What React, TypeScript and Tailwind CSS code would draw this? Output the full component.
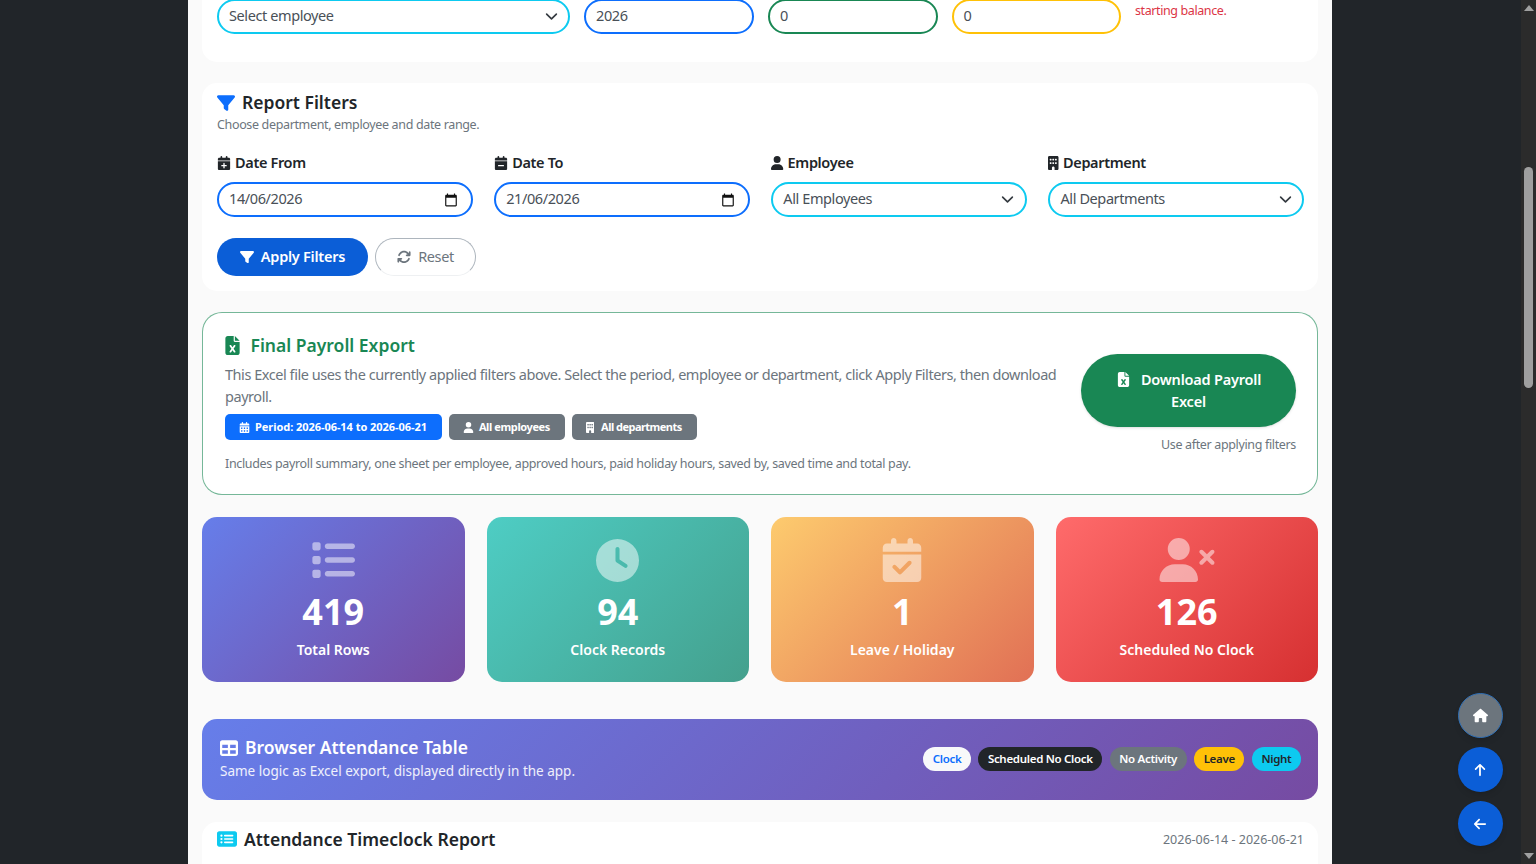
import type { ReactNode } from 'react';
import {
  FaFilter, FaCalendarPlus, FaCalendarMinus, FaUser, FaBuilding, FaArrowsRotate, FaFileExcel,
  FaCalendarDays, FaList, FaClock, FaCalendarCheck, FaUserXmark, FaTable, FaRectangleList,
  FaHouse, FaArrowUp, FaArrowLeft,
} from 'react-icons/fa6';

function Chevron() {
  return (
    <svg viewBox="0 0 16 16" className="w-[13px] h-[13px] shrink-0 -mr-[1.5px]" fill="none" stroke="#343a40" strokeWidth="2" strokeLinecap="round" strokeLinejoin="round">
      <path d="m2 5 6 6 6-6" />
    </svg>
  );
}

function CalendarGlyph() {
  return (
    <svg viewBox="0 0 24 24" className="w-[14px] h-[14px] shrink-0 mr-[1px]" fill="#111">
      <path d="M20 3h-1V1h-2v2H7V1H5v2H4c-1.1 0-2 .9-2 2v16c0 1.1.9 2 2 2h16c1.1 0 2-.9 2-2V5c0-1.1-.9-2-2-2zm0 18H4V8h16v13z" />
    </svg>
  );
}

function Field({ border, children, right }: { border: string; children: ReactNode; right?: ReactNode }) {
  return (
    <div className={`h-[35px] rounded-[18px] border-2 ${border} bg-white pl-[10px] pr-[12px] flex items-center justify-between text-[14.5px] tracking-[-0.4px] text-[#495057]`}>
      <span className="-mt-[2px]">{children}</span>
      {right}
    </div>
  );
}

function FilterCol({ icon, label, children }: { icon: ReactNode; label: string; children: ReactNode }) {
  return (
    <div>
      <div className="h-[20px] flex items-center gap-[4px] text-[14.5px] tracking-[-0.35px] font-semibold text-[#212529] mb-[9px]">
        {icon}
        <span>{label}</span>
      </div>
      {children}
    </div>
  );
}

function Badge({ className, icon, children }: { className: string; icon: ReactNode; children: ReactNode }) {
  return (
    <span className={`h-[26px] rounded-[5px] text-white text-[11px] font-bold flex items-center ${className}`}>
      {icon}
      {children}
    </span>
  );
}

function Stat({ gradient, icon, value, label }: { gradient: string; icon: ReactNode; value: string; label: string }) {
  return (
    <div className={`h-[165px] rounded-[15px] ${gradient} text-white flex flex-col items-center pt-[21px]`}>
      <div className="h-[44px] flex items-center justify-center text-white/50">{icon}</div>
      <div className="text-[36px] leading-[48px] font-bold mt-[6px]">{value}</div>
      <div className="text-[14px] leading-[20px] font-semibold mt-[4px]">{label}</div>
    </div>
  );
}

function Pill({ color, children }: { color: string; children: ReactNode }) {
  return <span className={`h-[24px] rounded-full px-[9.5px] flex items-center text-[11.5px] tracking-[-0.3px] font-semibold ${color}`}>{children}</span>;
}

function RoundButton({ color, children }: { color: string; children: ReactNode }) {
  return <button className={`w-[45px] h-[45px] rounded-full flex items-center justify-center text-white shadow-md ${color}`}>{children}</button>;
}

export default function App() {
  return (
    <div className="h-screen overflow-hidden bg-[#212529] flex font-['Noto_Sans','Open_Sans',sans-serif]">
      <main className="ml-[188px] w-[1144px] h-full overflow-hidden bg-[#fafafa] px-[14px]">
        {/* balance card, cut by the scroll position */}
        <section className="bg-white rounded-b-[15px] px-[15px] pb-[28px] -mt-px grid grid-cols-[353px_170px_169.5px_169.5px_1fr] gap-[14px]">
          <Field border="border-[#0dcaf0]" right={<Chevron />}>Select employee</Field>
          <Field border="border-[#0d6efd]">2026</Field>
          <Field border="border-[#198754]">0</Field>
          <Field border="border-[#ffc107]">0</Field>
          <p className="text-[12.5px] tracking-[-0.4px] leading-[20px] text-[#dc3545] pt-[2px]">starting balance.</p>
        </section>

        <section className="mt-[21px] h-[208px] bg-white rounded-[15px] pl-[15px] pr-[14px] pt-[8px]">
          <div className="flex items-center gap-[7px] h-[22px] pt-[1px]">
            <FaFilter className="text-[#0d6efd] text-[18px]" />
            <h2 className="text-[17.5px] font-semibold text-[#212529]">Report Filters</h2>
          </div>
          <p className="text-[12.5px] tracking-[-0.35px] leading-[20px] text-[#6c757d] mt-[2px]">Choose department, employee and date range.</p>
          <div className="grid grid-cols-4 gap-[21.67px] mt-[18px]">
            <FilterCol icon={<FaCalendarPlus className="text-[14px]" />} label="Date From">
              <Field border="border-[#0d6efd]" right={<CalendarGlyph />}>14/06/2026</Field>
            </FilterCol>
            <FilterCol icon={<FaCalendarMinus className="text-[14px]" />} label="Date To">
              <Field border="border-[#0d6efd]" right={<CalendarGlyph />}>21/06/2026</Field>
            </FilterCol>
            <FilterCol icon={<FaUser className="w-[12.25px] h-[14px]" />} label="Employee">
              <Field border="border-[#0dcaf0]" right={<Chevron />}>All Employees</Field>
            </FilterCol>
            <FilterCol icon={<FaBuilding className="w-[10.5px] h-[14px]" />} label="Department">
              <Field border="border-[#0dcaf0]" right={<Chevron />}>All Departments</Field>
            </FilterCol>
          </div>
          <div className="flex gap-[7px] mt-[21px]">
            <button className="h-[38px] w-[151px] rounded-full bg-[#0b5ed7] text-white text-[14.5px] tracking-[-0.25px] font-semibold flex items-center justify-center gap-[7px]">
              <FaFilter className="text-[14px]" /> Apply Filters
            </button>
            <button className="h-[38px] w-[101px] rounded-full border border-[#adb5bd] border-b-[#eef0f2] text-[#6c757d] text-[14.5px] tracking-[-0.4px] flex items-center justify-center gap-[7px]">
              <FaArrowsRotate className="text-[14px]" /> Reset
            </button>
          </div>
        </section>

        <section className="mt-[21px] h-[183px] bg-white rounded-[20px] border border-[#198754]/60 pl-[22px] pr-[21px] flex items-start gap-[16px]">
          <div className="flex-1 min-w-0 pt-[19px]">
            <div className="flex items-center gap-[9px] h-[26px]">
              <FaFileExcel className="text-[#198754] text-[19px] -ml-[2.5px]" />
              <h3 className="text-[17.5px] font-semibold text-[#198754]">Final Payroll Export</h3>
            </div>
            <p className="text-[14.5px] tracking-[-0.45px] leading-[22px] text-[#6c757d] mt-[5px]">
              This Excel file uses the currently applied filters above. Select the period, employee or department, click Apply Filters, then download payroll.
            </p>
            <div className="flex gap-[7px] mt-[7px]">
              <Badge className="bg-[#0d6efd] gap-[5px] pl-[14px] pr-[15px] tracking-[-0.05px]" icon={<FaCalendarDays className="text-[11px]" />}>Period: 2026-06-14 to 2026-06-21</Badge>
              <Badge className="bg-[#6c757d] gap-[5px] pl-[14px] pr-[15px] tracking-[-0.4px]" icon={<FaUser className="text-[11px]" />}>All employees</Badge>
              <Badge className="bg-[#6c757d] gap-[7px] pl-[14px] pr-[15px] tracking-[-0.53px]" icon={<FaBuilding className="w-[8.25px] h-[11px]" />}>All departments</Badge>
            </div>
            <p className="text-[12.5px] tracking-[-0.33px] leading-[18px] text-[#6c757d] mt-[15px]">
              Includes payroll summary, one sheet per employee, approved hours, paid holiday hours, saved by, saved time and total pay.
            </p>
          </div>
          <div className="w-[215px] shrink-0 pt-[41px] flex flex-col items-end">
            <button className="w-[215px] h-[73px] rounded-full bg-[#198754] text-white text-[14.5px] tracking-[-0.2px] leading-[22px] font-semibold shadow-sm px-[24px] pb-[2px]">
              <FaFileExcel className="inline text-[15px] mr-[10px] -mt-[3px]" />
              Download Payroll Excel
            </button>
            <span className="text-[12.5px] tracking-[-0.35px] leading-[18px] text-[#6c757d] mt-[9px]">Use after applying filters</span>
          </div>
        </section>

        <section className="mt-[22px] grid grid-cols-4 gap-[22px]">
          <Stat gradient="bg-[linear-gradient(135deg,#667eea,#764ba2)]" icon={<FaList className="text-[44px]" />} value="419" label="Total Rows" />
          <Stat gradient="bg-[linear-gradient(135deg,#4ecdc4,#44a08d)]" icon={<FaClock className="text-[43px]" />} value="94" label="Clock Records" />
          <Stat gradient="bg-[linear-gradient(135deg,#fdcb6e,#e17055)]" icon={<FaCalendarCheck className="text-[44px]" />} value="1" label="Leave / Holiday" />
          <Stat gradient="bg-[linear-gradient(135deg,#ff6b6b,#d63031)]" icon={<FaUserXmark className="w-[56px] h-[44px]" />} value="126" label="Scheduled No Clock" />
        </section>

        <section className="mt-[37px] h-[81px] rounded-[15px] bg-[linear-gradient(135deg,#667eea,#764ba2)] pl-[18px] pr-[17px] flex items-center justify-between text-white">
          <div className="pb-[3px]">
            <div className="flex items-center gap-[7px] h-[24px]">
              <FaTable className="text-[18px]" />
              <h3 className="text-[17.5px] font-semibold">Browser Attendance Table</h3>
            </div>
            <p className="text-[13.5px] leading-[20px] text-white/90 mt-[1px]">Same logic as Excel export, displayed directly in the app.</p>
          </div>
          <div className="flex gap-[7.5px] pb-[1px]">
            <Pill color="bg-[#f8f9fa] text-[#0d6efd]">Clock</Pill>
            <Pill color="bg-[#212529] text-white">Scheduled No Clock</Pill>
            <Pill color="bg-[#6c757d] text-white">No Activity</Pill>
            <Pill color="bg-[#ffc107] text-[#212529]">Leave</Pill>
            <Pill color="bg-[#0dcaf0] text-[#212529]">Night</Pill>
          </div>
        </section>

        <section className="mt-[22px] h-[60px] bg-white rounded-t-[15px] pl-[15px] pr-[14px] pt-[6px] flex items-start justify-between">
          <div className="flex items-center gap-[7px] h-[24px] -mt-px">
            <FaRectangleList className="text-[#0dcaf0] text-[20px]" />
            <h3 className="text-[17.5px] font-semibold text-[#212529]">Attendance Timeclock Report</h3>
          </div>
          <span className="text-[12.5px] leading-[24px] text-[#6c757d]">2026-06-14 - 2026-06-21</span>
        </section>
      </main>

      <div className="flex-1" />

      {/* window scrollbar */}
      <div className="w-[15px] h-full bg-[#2b2b2b] flex flex-col items-center">
        <svg viewBox="0 0 10 6" className="w-[10px] h-[6px] mt-[5px]" fill="#a0a0a0"><path d="M5 0 10 6H0z" /></svg>
        <div className="w-[9px] h-[221px] mt-[156px] rounded-full bg-[#9f9f9f]" />
        <svg viewBox="0 0 10 6" className="w-[10px] h-[6px] mt-auto mb-[5px]" fill="#a0a0a0"><path d="M0 0H10L5 6z" /></svg>
      </div>

      <div className="fixed left-[1457.5px] top-[693px] flex flex-col gap-[9px]">
        <RoundButton color="bg-[#6c757d] border border-[#2f6fb5]"><FaHouse className="text-[15px]" /></RoundButton>
        <RoundButton color="bg-[#0b5ed7]"><FaArrowUp className="text-[14px]" /></RoundButton>
        <RoundButton color="bg-[#0b5ed7]"><FaArrowLeft className="text-[14px]" /></RoundButton>
      </div>
    </div>
  );
}
